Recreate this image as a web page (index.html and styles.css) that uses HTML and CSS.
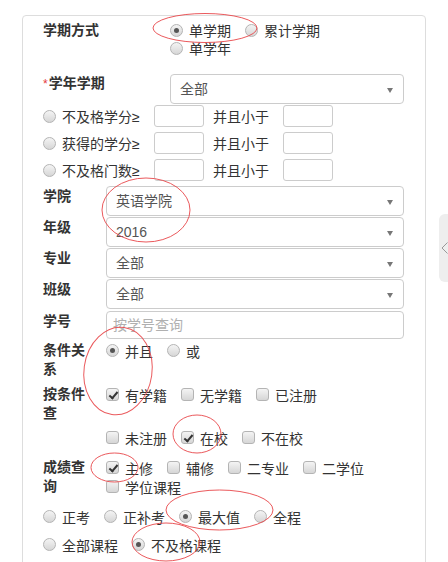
FILE: index.html
```html
<!DOCTYPE html>
<html lang="zh-CN">

<head>
    <meta charset="UTF-8">
    <meta name="viewport" content="width=device-width, initial-scale=1.0">
    <link rel="stylesheet" href="styles.css">
    <title>成绩查询</title>
</head>

<body>
    <div class="panel">
        <div class="row term-row">
            <div class="lbl wide">学期方式</div>
            <div class="opts">
                <div class="line">
                    <span class="opt"><i class="radio on"></i>单学期</span>
                    <span class="opt"><i class="radio"></i>累计学期</span>
                </div>
                <div class="line">
                    <span class="opt"><i class="radio"></i>单学年</span>
                </div>
            </div>
        </div>

        <div class="row year-row">
            <div class="lbl wide"><span class="req">*</span>学年学期</div>
            <div class="select">全部</div>
        </div>

        <div class="cond first">
            <span class="opt"><i class="radio"></i><span class="cond-text">不及格学分≥</span></span>
            <span class="num"></span>
            <span class="and">并且小于</span>
            <span class="num"></span>
        </div>
        <div class="cond">
            <span class="opt"><i class="radio"></i><span class="cond-text">获得的学分≥</span></span>
            <span class="num"></span>
            <span class="and">并且小于</span>
            <span class="num"></span>
        </div>
        <div class="cond">
            <span class="opt"><i class="radio"></i><span class="cond-text">不及格门数≥</span></span>
            <span class="num"></span>
            <span class="and">并且小于</span>
            <span class="num"></span>
        </div>

        <div class="row field-row college">
            <div class="lbl">学院</div>
            <div class="select">英语学院</div>
        </div>
        <div class="row field-row">
            <div class="lbl">年级</div>
            <div class="select">2016</div>
        </div>
        <div class="row field-row">
            <div class="lbl">专业</div>
            <div class="select">全部</div>
        </div>
        <div class="row field-row">
            <div class="lbl">班级</div>
            <div class="select">全部</div>
        </div>
        <div class="row field-row stu-no">
            <div class="lbl">学号</div>
            <div class="text-input">按学号查询</div>
        </div>

        <div class="row group logic">
            <div class="lbl">条件关系</div>
            <div class="opts">
                <div class="line">
                    <span class="opt"><i class="radio on"></i>并且</span>
                    <span class="opt"><i class="radio"></i>或</span>
                </div>
            </div>
        </div>

        <div class="row group status">
            <div class="lbl">按条件查</div>
            <div class="opts">
                <div class="line">
                    <span class="opt"><i class="check on"></i>有学籍</span>
                    <span class="opt"><i class="check"></i>无学籍</span>
                    <span class="opt"><i class="check"></i>已注册</span>
                </div>
            </div>
        </div>
        <div class="row group status-2">
            <div class="opts indent">
                <div class="line">
                    <span class="opt"><i class="check"></i>未注册</span>
                    <span class="opt"><i class="check on"></i>在校</span>
                    <span class="opt"><i class="check"></i>不在校</span>
                </div>
            </div>
        </div>

        <div class="row group score">
            <div class="lbl">成绩查询</div>
            <div class="opts">
                <div class="line">
                    <span class="opt"><i class="check on"></i>主修</span>
                    <span class="opt"><i class="check"></i>辅修</span>
                    <span class="opt"><i class="check"></i>二专业</span>
                    <span class="opt"><i class="check"></i>二学位</span>
                </div>
                <div class="line">
                    <span class="opt"><i class="check"></i>学位课程</span>
                </div>
            </div>
        </div>

        <div class="row group exam">
            <div class="line">
                <span class="opt"><i class="radio"></i>正考</span>
                <span class="opt"><i class="radio"></i>正补考</span>
                <span class="opt"><i class="radio on"></i>最大值</span>
                <span class="opt"><i class="radio"></i>全程</span>
            </div>
        </div>

        <div class="row group course">
            <div class="line">
                <span class="opt"><i class="radio"></i>全部课程</span>
                <span class="opt"><i class="radio on"></i>不及格课程</span>
            </div>
        </div>
    </div>

    <div class="side-tab">
        <svg width="7" height="12" viewBox="0 0 7 12">
            <polyline points="6.5,0.5 1,6 6.5,11.5" fill="none" stroke="#999" stroke-width="1" />
        </svg>
    </div>

    <!-- hand drawn marks over the form -->
    <svg class="marks" width="448" height="562" viewBox="0 0 448 562">
        <ellipse cx="205" cy="28" rx="52" ry="14.5" />
        <ellipse cx="146" cy="210" rx="44" ry="32" />
        <ellipse cx="118" cy="371" rx="34" ry="44" transform="rotate(8 118 371)" />
        <ellipse cx="197" cy="434" rx="24" ry="19" />
        <ellipse cx="114.5" cy="467.5" rx="23.5" ry="14.5" />
        <ellipse cx="219.5" cy="510" rx="53.5" ry="20" />
        <ellipse cx="166" cy="542" rx="34" ry="19" />
    </svg>
</body>

</html>
```

FILE: styles.css
```css
body {
    margin: 0;
    background: #FFFFFF;
    font-family: "Liberation Sans", "Noto Sans CJK SC", sans-serif;
    font-size: 14px;
    color: #333333;
}

.panel {
    box-sizing: border-box;
    width: 404px;
    margin: 15px 0 0 22px;
    padding: 5px 21px 40px 20px;
    border: 1px solid #dddddd;
    border-radius: 4px;
}

.row {
    display: flex;
}

.lbl {
    flex: none;
    width: 50px;
    margin-right: 13px;
    font-weight: bold;
    line-height: 19px;
    color: #333333;
}

.lbl.wide {
    width: 127px;
    margin-right: 0;
    line-height: 18px;
}

.req {
    color: #e5393d;
    font-weight: normal;
    font-size: 12px;
    margin-right: 1px;
}

.opts {
    flex: 1;
}

.opts.indent {
    margin-left: 63px;
}

.line {
    display: flex;
    align-items: center;
    gap: 14px;
    height: 19px;
    white-space: nowrap;
}

.term-row .line {
    height: 18px;
}

.opt {
    display: inline-flex;
    align-items: center;
}

.radio,
.check {
    position: relative;
    flex: none;
    box-sizing: border-box;
    width: 13px;
    height: 13px;
    margin-right: 6px;
    border: 1px solid #b4b4b4;
    background: linear-gradient(#f4f4f4, #d6d6d6);
}

.radio {
    border-radius: 50%;
}

.check {
    border-radius: 3px;
}

.radio.on::after {
    content: "";
    position: absolute;
    left: 3px;
    top: 3px;
    width: 5px;
    height: 5px;
    border-radius: 50%;
    background: #555555;
}

.check.on::after {
    content: "";
    position: absolute;
    left: 3.5px;
    top: 0.5px;
    width: 3px;
    height: 7px;
    border: solid #333333;
    border-width: 0 2px 2px 0;
    transform: rotate(40deg);
}

.select,
.text-input {
    position: relative;
    flex: 1;
    box-sizing: border-box;
    height: 30px;
    padding-left: 9px;
    border: 1px solid #cccccc;
    border-radius: 4px;
    line-height: 28px;
    color: #555555;
}

.select::after {
    content: "";
    position: absolute;
    right: 10px;
    top: 13px;
    border-left: 3.5px solid transparent;
    border-right: 3.5px solid transparent;
    border-top: 5px solid #777777;
}

.year-row {
    margin-top: 17px;
}

.year-row .lbl {
    line-height: 18px;
}

.cond {
    display: flex;
    align-items: center;
    height: 22px;
    margin-top: 5px;
    white-space: nowrap;
}

.cond.first {
    margin-top: 1px;
}

.cond-text {
    display: inline-block;
    width: 92px;
}

.num {
    box-sizing: border-box;
    width: 50px;
    height: 22px;
    border: 1px solid #cccccc;
    border-radius: 3px;
}

.and {
    margin: 0 14px 0 9px;
}

.field-row {
    margin-top: 1px;
}

.field-row .lbl {
    line-height: 21px;
}

.field-row.college {
    margin-top: 5px;
}

.field-row.stu-no {
    margin-top: 2px;
}

.text-input {
    height: 28px;
    line-height: 26px;
    padding-left: 6px;
    color: #b0b0b0;
}

.logic {
    margin-top: 2px;
}

.status {
    margin-top: 6px;
}

.status-2 {
    margin-top: 5px;
}

.score {
    margin-top: 11px;
}

.exam {
    margin-top: 11px;
}

.course {
    margin-top: 9px;
}

.side-tab {
    position: absolute;
    top: 214px;
    right: 0;
    width: 9px;
    height: 68px;
    background: #eeeeee;
    border-radius: 6px 0 0 6px;
}

.side-tab svg {
    position: absolute;
    left: 2px;
    top: 28px;
}

.marks {
    position: absolute;
    left: 0;
    top: 0;
    pointer-events: none;
}

.marks ellipse {
    fill: none;
    stroke: #e8474a;
    stroke-width: 1;
    opacity: 0.9;
}
```
